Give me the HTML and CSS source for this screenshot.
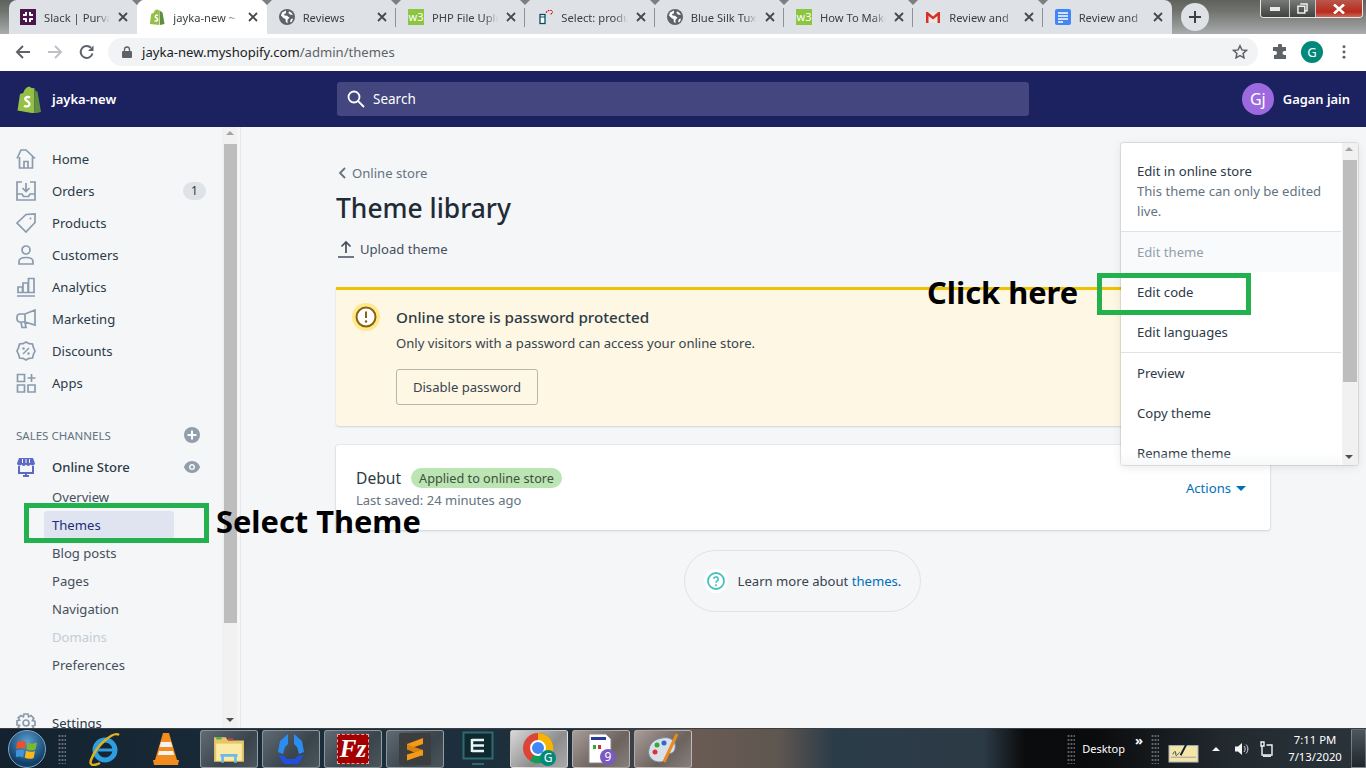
FILE: index.html
```html
<!DOCTYPE html>
<html lang="en">
<head>
<meta charset="utf-8">
<title>Theme library</title>
<link rel="stylesheet" href="styles.css">
</head>
<body>
<svg class="defs" width="0" height="0" aria-hidden="true">
  <symbol id="globe" viewBox="0 0 16 16"><circle cx="8" cy="8" r="8" fill="#5f6368"/><path fill="#fff" d="M7 1.500 3 3.500 2 6.500l3 3 1.500.2.3 3 1.700 1.800V10.800l2-2-2.500-2-2.500-.3-.5-1.500 1.700-.5L7 3.500zM10 2.300l-.5 1.700 1.500 1.500 3 .5A6.800 6.800 0 0 0 10 2.300zM14 9.500l-2 .5-1 2.500 1 1a6.800 6.800 0 0 0 2-4z"/></symbol>
  <symbol id="close" viewBox="0 0 10 10"><path d="M1 1l8 8M9 1l-8 8" stroke="#45484d" stroke-width="1.800" fill="none"/></symbol>
</svg>

<header class="tabstrip">
  <div class="tabs">
    <div class="tab">
      <svg class="fav" viewBox="0 0 16 16"><rect width="16" height="16" fill="#4a154b"/><path d="M6 3v3.500M3 6h3.500M10 3v3.500M9.500 6H13M6 9.500V13M3 10h3.500M10 9.500V13M9.500 10H13" stroke="#fff" stroke-width="2" fill="none"/></svg>
      <span class="tab-title">Slack | Purva</span>
      <svg class="x"><use href="#close"/></svg>
    </div>
    <div class="tab active">
      <svg class="fav" viewBox="0 0 16 16"><path fill="#95bf47" d="M9.500 1C8.800.3 7.500.3 6.500 1 5.500 1.800 4.800 2.800 4.500 4L2.300 4.700.8 15l9.500 1V1z"/><path fill="#5e8e3e" d="M10.500 1.500 11 16l4.500-1-2-11.500z"/><path d="M9 6.500C7.500 5.800 6 6.500 6.300 7.800c.3 1 2.500 1.500 2.400 3C8.600 12 7 12.500 5.500 11.700" stroke="#fff" stroke-width="1.500" fill="none"/></svg>
      <span class="tab-title">jayka-new ~</span>
      <svg class="x"><use href="#close"/></svg>
    </div>
    <div class="tab sep">
      <svg class="fav"><use href="#globe"/></svg>
      <span class="tab-title">Reviews</span>
      <svg class="x"><use href="#close"/></svg>
    </div>
    <div class="tab sep">
      <span class="fav w3">w3</span>
      <span class="tab-title">PHP File Upload</span>
      <svg class="x"><use href="#close"/></svg>
    </div>
    <div class="tab sep">
      <svg class="fav" viewBox="-3 -1 16 16"><rect x="0" y="4.500" width="5" height="9" fill="#fff" stroke="#00505f" stroke-width="1.300"/><path d="M0 7h5" stroke="#00505f"/><path d="M6 2.500 8.500.5h3L13 2.500l-2 1.500H9.500" stroke="#c00" stroke-width="1.200" stroke-dasharray="1.500 1" fill="none"/></svg>
      <span class="tab-title">Select: product</span>
      <svg class="x"><use href="#close"/></svg>
    </div>
    <div class="tab sep">
      <svg class="fav"><use href="#globe"/></svg>
      <span class="tab-title">Blue Silk Tuxedo</span>
      <svg class="x"><use href="#close"/></svg>
    </div>
    <div class="tab sep">
      <span class="fav w3">w3</span>
      <span class="tab-title">How To Make</span>
      <svg class="x"><use href="#close"/></svg>
    </div>
    <div class="tab sep">
      <svg class="fav" viewBox="0 0 16 16"><path fill="#e8e8e8" d="M1 3h14v11H1z"/><path fill="#d93025" d="M1 14V3h1.800L8 7.500 13.200 3H15v11h-2.500V7L8 10.500 3.500 7v7z"/></svg>
      <span class="tab-title">Review and</span>
      <svg class="x"><use href="#close"/></svg>
    </div>
    <div class="tab">
      <svg class="fav" viewBox="0 0 16 16"><rect width="16" height="16" rx="2" fill="#4285f4"/><path d="M3 4h10M3 7h10M3 10h10M3 13h5" stroke="#fff" stroke-width="1.500"/></svg>
      <span class="tab-title">Review and</span>
      <svg class="x"><use href="#close"/></svg>
    </div>
  </div>
  <div class="newtab"><svg width="14" height="14" viewBox="0 0 14 14"><path d="M7 1v12M1 7h12" stroke="#3c4043" stroke-width="2"/></svg></div>
  <div class="winctl">
    <span class="wbtn wmin"><svg width="10" height="4" viewBox="0 0 10 4"><rect width="10" height="4" fill="#e8eaea"/></svg></span>
    <span class="wbtn wmax"><svg width="11" height="11" viewBox="0 0 12 12"><path d="M3.500 1h7.500v7.500H8.500M1 3.500h7.500V11H1z" fill="none" stroke="#eee" stroke-width="1.600"/></svg></span>
    <span class="wbtn wclose"><svg width="12" height="10" viewBox="0 0 12 10"><path d="M1 .5l10 9M11 .5l-10 9" stroke="#fff" stroke-width="2.600"/></svg></span>
  </div>
</header>

<nav class="toolbar">
  <svg class="tbicon" viewBox="0 0 16 16"><path d="M15 8H2M8 2 2 8l6 6" fill="none" stroke="#5f6368" stroke-width="2"/></svg>
  <svg class="tbicon" viewBox="0 0 16 16"><path d="M1 8h13M8 2l6 6-6 6" fill="none" stroke="#bdc1c6" stroke-width="2"/></svg>
  <svg class="tbicon" viewBox="0 0 16 16"><path d="M13.500 9.500A6 6 0 1 1 12 3.800" fill="none" stroke="#5f6368" stroke-width="2"/><path d="M14.500 1.500v5.500H9z" fill="#5f6368"/></svg>
  <div class="omnibox">
    <svg class="lock" viewBox="0 0 10 12"><path d="M2.500 5V3.500a2.500 2.500 0 0 1 5 0V5" fill="none" stroke="#5f6368" stroke-width="1.300"/><rect y="5" width="10" height="7" rx="1" fill="#5f6368"/></svg>
    <span class="url">jayka-new.myshopify.com<span class="url-path">/admin/themes</span></span>
    <svg class="star" viewBox="0 0 16 16"><path d="M8 1.800l1.900 4.100 4.500.5-3.300 3 .9 4.500L8 11.700l-4 2.200.9-4.500-3.300-3 4.500-.5z" fill="none" stroke="#5f6368" stroke-width="1.500"/></svg>
  </div>
  <svg class="puzzle" viewBox="0 0 16 16"><path fill="#5f6368" d="M6 1.500a2 2 0 0 1 4 0V3h4v4h-1.500a2 2 0 0 0 0 4H14v4H2v-4h1a2 2 0 0 0 0-4H1V3h5z"/></svg>
  <span class="chrome-avatar">G</span>
  <svg class="dots" viewBox="0 0 4 16"><circle cx="2" cy="2" r="1.700" fill="#5f6368"/><circle cx="2" cy="8" r="1.700" fill="#5f6368"/><circle cx="2" cy="14" r="1.700" fill="#5f6368"/></svg>
</nav>

<header class="topbar">
  <div class="brand">
    <svg class="logo" viewBox="0 0 24 27"><path fill="#95bf47" d="M14.500 2C13.500.8 12.500.6 11.500.8 9 1.300 7 4 6.300 7L3 8 .5 24.500 17.500 27.500V2.300z"/><path fill="#5e8e3e" d="M18 2.500 17.500 27.500 24 26 20.500 5.500 18.500 5z"/><path d="M13 11.500c-2.500-1-5-.3-4.700 1.700.3 1.800 4.300 2.300 4.200 5-.1 2.300-3 2.800-5.500 1.500" fill="none" stroke="#fff" stroke-width="2.400"/></svg>
    <span class="brand-name">jayka-new</span>
  </div>
  <div class="search">
    <svg class="search-icon" viewBox="0 0 18 18"><circle cx="7" cy="7" r="5.500" fill="none" stroke="#fff" stroke-width="1.800"/><path d="M11 11l6 6" stroke="#fff" stroke-width="1.800"/></svg>
    <span>Search</span>
  </div>
  <div class="user">
    <span class="avatar">Gj</span>
    <span class="user-name">Gagan jain</span>
  </div>
</header>

<div class="workspace">
  <aside class="sidebar">
    <div class="side-scroll">
      <ul class="nav">
        <li class="nav-item"><svg class="ni" viewBox="0 0 20 20"><path d="M1 9.500 5 1h5l9 8.500M3.500 8v11h13V8M8 19v-6.500h4V19" fill="none" stroke="#8a9bad" stroke-width="1.700"/></svg>Home</li>
        <li class="nav-item"><svg class="ni" viewBox="0 0 20 20"><path d="M6 1H1v18h18V1h-5M1 13h5l1.500 2.500h5L14 13h5" fill="none" stroke="#8a9bad" stroke-width="1.700"/><path d="M10 2v8M6.500 7l3.500 3.500L13.500 7" fill="none" stroke="#8a9bad" stroke-width="1.700"/></svg>Orders<span class="count">1</span></li>
        <li class="nav-item"><svg class="ni" viewBox="0 0 20 20"><path d="M1 10 10 1.500 19 1v8.500L10 19z" fill="none" stroke="#8a9bad" stroke-width="1.700"/><circle cx="14.500" cy="5.500" r="1" fill="#8a9bad"/></svg>Products</li>
        <li class="nav-item"><svg class="ni" viewBox="0 0 20 20"><circle cx="10" cy="5" r="4" fill="none" stroke="#8a9bad" stroke-width="1.700"/><path d="M3 19v-2.500c0-3 3-4 7-4s7 1 7 4V19z" fill="none" stroke="#8a9bad" stroke-width="1.700"/></svg>Customers</li>
        <li class="nav-item"><svg class="ni" viewBox="0 0 20 20"><path d="M1 19h18M2 16v-6h4.500v6M7 16V6h5v10M12.500 16V1.500H18V16M1 15.500h18" fill="none" stroke="#8a9bad" stroke-width="1.700"/></svg>Analytics</li>
        <li class="nav-item"><svg class="ni" viewBox="0 0 20 20"><path d="M19 1v15L9 13H4a3 3 0 0 1-3-3V8a3 3 0 0 1 3-3h5zM9 5v8M5 13l1 5.500h4l-1-5" fill="none" stroke="#8a9bad" stroke-width="1.700"/></svg>Marketing</li>
        <li class="nav-item"><svg class="ni" viewBox="0 0 20 20"><path d="M10 1l3 1.700 3.500.3.900 3.500L19 10l-1.600 3.500-.9 3.500-3.500.3L10 19l-3-1.700-3.500-.3-.9-3.500L1 10l1.600-3.500.9-3.500L7 2.700z" fill="none" stroke="#8a9bad" stroke-width="1.700"/><path d="M7 13l6-6" stroke="#8a9bad" stroke-width="1.500"/><circle cx="7.500" cy="7.500" r="1.200" fill="#8a9bad"/><circle cx="12.500" cy="12.500" r="1.200" fill="#8a9bad"/></svg>Discounts</li>
        <li class="nav-item"><svg class="ni" viewBox="0 0 20 20"><path d="M1.500 1.500h7v7h-7zM1.500 12h7v7h-7zM12 12h7v7h-7zM15.500 1v8M11.500 5h8" fill="none" stroke="#8a9bad" stroke-width="1.700"/></svg>Apps</li>
      </ul>
      <div class="channels-head">
        <span>SALES CHANNELS</span>
        <svg class="mini" viewBox="0 0 16 16"><circle cx="8" cy="8" r="8" fill="#919eab"/><path d="M8 3.500v9M3.500 8h9" stroke="#fff" stroke-width="2"/></svg>
      </div>
      <div class="nav-item store"><svg class="ni" viewBox="0 0 20 20"><path d="M3 1h14l2 5.500a2.500 2.500 0 0 1-4.500 1 2.500 2.500 0 0 1-4.500 0 2.500 2.500 0 0 1-4.500 0A2.500 2.500 0 0 1 1 6.500z" fill="#5c6ac4"/><path d="M3 9v7h14V9M7 19h6M10 16v3" fill="none" stroke="#5c6ac4" stroke-width="2"/><path d="M6.500 2v4M10 2v4M13.500 2v4" stroke="#f4f6f8" stroke-width="1"/></svg>Online Store
        <svg class="mini eye" viewBox="0 0 16 12"><path d="M8 0C3.500 0 .8 3.500 0 6c.8 2.500 3.500 6 8 6s7.200-3.500 8-6c-.8-2.500-3.500-6-8-6z" fill="#919eab"/><circle cx="8" cy="6" r="3" fill="#f4f6f8"/><circle cx="8" cy="6" r="1.500" fill="#919eab"/></svg>
      </div>
      <ul class="subnav">
        <li class="sub">Overview</li>
        <li class="sub current">Themes</li>
        <li class="sub">Blog posts</li>
        <li class="sub">Pages</li>
        <li class="sub">Navigation</li>
        <li class="sub off">Domains</li>
        <li class="sub">Preferences</li>
      </ul>
      <div class="nav-item settings"><svg class="ni" viewBox="0 0 20 20"><path d="M8 1h4l.6 2.700 2.400-1.200 2.800 2.800-1.400 2.300 2.600.7v4l-2.600.7 1.400 2.300-2.800 2.800-2.400-1.200L12 19H8l-.6-2.600L5 17.600l-2.800-2.800 1.400-2.300L1 11.800v-4l2.600-.7-1.400-2.300L5 2.500l2.400 1.200z" fill="none" stroke="#8a9bad" stroke-width="1.700"/><circle cx="10" cy="10" r="3" fill="none" stroke="#8a9bad" stroke-width="1.700"/></svg>Settings</div>
    </div>
    <div class="vbar">
      <span class="arrow up"></span>
      <span class="thumb"></span>
      <span class="arrow down"></span>
    </div>
  </aside>

  <main class="content">
    <div class="back"><svg width="8" height="12" viewBox="0 0 8 12"><path d="M7 1 2 6l5 5" fill="none" stroke="#637381" stroke-width="1.800"/></svg>Online store</div>
    <h1 class="title">Theme library</h1>
    <div class="upload"><svg width="18" height="18" viewBox="0 0 18 18"><path d="M9 13V2M4.500 6.500 9 2l4.500 4.500M1 17h16" fill="none" stroke="#454f5b" stroke-width="1.700"/></svg>Upload theme</div>

    <section class="banner">
      <svg class="warn" viewBox="0 0 28 28"><circle cx="14" cy="14" r="14" fill="#ffea8a"/><circle cx="14" cy="14" r="9.500" fill="#fff" stroke="#8a6116" stroke-width="2"/><path d="M14 8.500v6.500" stroke="#8a6116" stroke-width="2"/><circle cx="14" cy="18.500" r="1.200" fill="#8a6116"/></svg>
      <div class="banner-body">
        <h2 class="banner-title">Online store is password protected</h2>
        <p class="banner-text">Only visitors with a password can access your online store.</p>
        <button class="btn">Disable password</button>
      </div>
    </section>

    <section class="card">
      <div class="card-main">
        <div class="theme-line"><span class="theme-name">Debut</span><span class="badge">Applied to online store</span></div>
        <div class="saved">Last saved: 24 minutes ago</div>
      </div>
      <div class="actions">Actions<span class="caret"></span></div>
    </section>

    <div class="help-wrap">
      <div class="help">
        <span class="help-ico"><svg width="18" height="18" viewBox="0 0 18 18"><circle cx="9" cy="9" r="8" fill="none" stroke="#47c1bf" stroke-width="1.800"/><path d="M6.800 7a2.200 2.200 0 1 1 3.300 2c-.8.500-1.100.9-1.100 1.700" fill="none" stroke="#47c1bf" stroke-width="1.600"/><circle cx="9" cy="13.200" r="1" fill="#47c1bf"/></svg></span>
        <span>Learn more about <a class="link">themes</a>.</span>
      </div>
    </div>
  </main>
</div>

<footer class="taskbar">
  <div class="orb"><svg width="22" height="22" viewBox="0 0 22 22"><path d="M1 4c3-1.500 6-1.500 9 0l-1.300 7C5.700 9.500 3 9.500 0 11z" fill="#e8532b"/><path d="M11.500 4.500c3 1.500 6 1.500 9.500 0L19.500 11.500c-3 1.500-6 1-9-.3z" fill="#7cb82f"/><path d="M0 12.500c3-1.500 5.500-1.500 8.500 0L7.200 19.500c-3-1.500-5.500-1.500-8.500 0z" fill="#3d95d8"/><path d="M10 12.700c3 1.400 6 1.600 9 .3l-1.300 7c-3 1.300-6 1-9-.3z" fill="#f6b81a"/></svg></div>
  <span class="grip"></span>
  <svg class="pin ie" viewBox="0 0 34 34"><circle cx="16" cy="18" r="10" fill="none" stroke="#2d9ee0" stroke-width="5"/><path d="M8 18h17" stroke="#2d9ee0" stroke-width="3"/><path d="M30 3C25-1 8 12 2 28c-2 6 3 6 9 3" fill="none" stroke="#e0b020" stroke-width="2.500"/></svg>
  <svg class="pin vlc" viewBox="0 0 28 34"><path d="M11 1h6l8 27H3z" fill="#f28c1e"/><path d="M9 10h10l1.500 5H7.500zM7 19h14l1 4H6z" fill="#f3f3f3"/><path d="M1 28h26l-1 5H2z" fill="#f28c1e"/></svg>
  <div class="tbtn first"><svg width="32" height="32" viewBox="0 0 30 30"><path d="M1 4h11l2 3h15v20H1z" fill="#e8c667"/><path d="M3 4h5v2H3z" fill="#4a4"/><path d="M14 5h5v2h-5z" fill="#c44"/><path d="M3 10h24v16H3z" fill="#fbeaa6"/><path d="M9 28v-7h12v7M7 21h16" fill="none" stroke="#6fb8e8" stroke-width="2.500"/></svg></div>
  <div class="tbtn"><svg width="30" height="32" viewBox="0 0 30 32"><path d="M12 1 4 8 2 19l5 2 2-7 3-3zM18 1l8 7 2 11-5 2-2-7-3-3z" fill="#2d8cf0"/><path d="M2 22l6 1 3 3h8l3-3 6-1-6 9H8z" fill="#1f50e0"/></svg></div>
  <div class="tbtn"><span class="fz">Fz</span></div>
  <div class="tbtn"><span class="subl"><svg width="18" height="24" viewBox="0 0 18 24"><path d="M17 1v6L1 12.500V7z" fill="#f59a16"/><path d="M1 7.500 17 13v6L1 12.500z" fill="#d9820e"/><path d="M17 13v5L1 23.500v-6z" fill="#f59a16"/></svg></span></div>
  <svg class="pin term" viewBox="0 0 32 36"><rect x="1.500" y="1.500" width="29" height="26" fill="#0e2a30" stroke="#2e6a70" stroke-width="2"/><path d="M10 9h12M10 14.500h12M10 20h12M10 8v13" stroke="#e9f4f4" stroke-width="2.500" fill="none"/><path d="M10 33h12" stroke="#2e6a70" stroke-width="2"/></svg>
  <div class="tbtn light"><svg width="34" height="34" viewBox="0 0 34 34"><circle cx="16" cy="16" r="15" fill="#db4437"/><path d="M16 16 29 24a15 15 0 0 1-21 5z" fill="#0f9d58"/><path d="M16 1a15 15 0 0 1 14 21L16 16z" fill="#f4b400"/><circle cx="16" cy="16" r="7" fill="#4285f4" stroke="#fff" stroke-width="2"/><circle cx="26" cy="26" r="8" fill="#00897b"/><text class="chip" x="26" y="30">G</text></svg></div>
  <div class="tbtn light2"><svg width="34" height="34" viewBox="0 0 34 34"><path d="M5 2h17l5 5v24H5z" fill="#fff" stroke="#888"/><path d="M7 5h15v3H7z" fill="#2a3a9a"/><path d="M9 13h3v4H9z" fill="#3a3"/><path d="M14 13h3v4h-3z" fill="#c33"/><circle cx="24" cy="25" r="8" fill="#7a5ac0"/><text class="chip" x="24" y="29">9</text></svg></div>
  <div class="tbtn light2"><svg width="34" height="34" viewBox="0 0 34 34"><path d="M16 6c8-2 15 3 13 11-1 5-6 4-8 6-3 3-2 7-7 7C6 30 1 24 3 17 4 11 9 7 16 6z" fill="#d9dfe8" stroke="#789"/><circle cx="11" cy="13" r="2.500" fill="#3a3"/><circle cx="9" cy="20" r="2.500" fill="#d33"/><circle cx="18" cy="11" r="2.500" fill="#36c"/><path d="M31 2 18 30" stroke="#e98a1c" stroke-width="3"/></svg></div>
  <div class="tray">
    <span class="grip"></span>
    <span class="desk">Desktop</span>
    <span class="chev">»</span>
    <span class="grip"></span>
    <svg class="note" viewBox="0 0 32 32"><rect x="1" y="13" width="30" height="17" fill="#f2e6a8" stroke="#aab"/><path d="M3 25h26" stroke="#a99"/><path d="M24 2 13 23" stroke="#123" stroke-width="2"/><path d="M5 22c2-4 3-4 3 0s3-2 4-2" fill="none" stroke="#345"/></svg>
    <span class="tri"></span>
    <svg class="tray-ico" viewBox="0 0 16 16"><path d="M1 5.500h3L8 2v12L4 10.500H1z" fill="#f4f4f4"/><path d="M10 5c1.500 1.500 1.500 4.500 0 6M12 3.500c2.500 2.500 2.500 6.500 0 9" fill="none" stroke="#dde" stroke-width="1"/></svg>
    <svg class="tray-ico" viewBox="0 0 16 16"><path d="M2 1h3v4H2zM3 5v9h10V4H7.500" fill="none" stroke="#f4f4f4" stroke-width="1.400"/><path d="M4 15.200h8" stroke="#f4f4f4" stroke-width="1.400"/></svg>
    <div class="clock"><span>7:11 PM</span><span>7/13/2020</span></div>
    <span class="showdesk"></span>
  </div>
</footer>

<div class="menu">
  <div class="menu-list">
    <div class="menu-sec top">
      <div class="mi">Edit in online store<span class="mi-note">This theme can only be edited live.</span></div>
    </div>
    <div class="menu-sec">
      <div class="mi dim">Edit theme</div>
      <div class="mi">Edit code</div>
      <div class="mi">Edit languages</div>
    </div>
    <div class="menu-sec last">
      <div class="mi">Preview</div>
      <div class="mi">Copy theme</div>
      <div class="mi">Rename theme</div>
    </div>
  </div>
  <div class="vbar menu-bar">
    <span class="arrow up"></span>
    <span class="thumb"></span>
    <span class="arrow down"></span>
  </div>
</div>

<div class="mark mark-themes"></div>
<div class="mark mark-code"></div>
<div class="note-label label-click">Click here</div>
<div class="note-label label-select">Select Theme</div>
</body>
</html>
```
FILE: styles.css
```css
* { box-sizing: border-box; }
html, body { margin: 0; padding: 0; }
body {
  position: relative;
  width: 1366px;
  height: 768px;
  overflow: hidden;
  display: flex;
  flex-direction: column;
  font-family: "Noto Sans", "Open Sans", sans-serif;
  font-size: 13px;
  color: #212b36;
  background: #f4f6f8;
}
ul { list-style: none; margin: 0; padding: 0; }
h1, h2, p { margin: 0; font-weight: 400; }
.defs { position: absolute; }

/* browser tabs */
.tabstrip {
  position: relative;
  display: flex;
  align-items: flex-start;
  height: 34px;
  flex: none;
  background: linear-gradient(180deg, #5f625c 0, #6f716c 30%, #a9abad 100%);
  padding-left: 9px;
}
.tabs { display: flex; width: 1163px; height: 34px; background: #dee1e6; border-radius: 8px 8px 0 0; }
.tab {
  position: relative;
  flex: 1 1 0;
  min-width: 0;
  display: flex;
  align-items: center;
  gap: 8px;
  padding: 0 9px 0 12px;
  font-size: 11.200px;
  color: #3c4043;
}
.tab:first-child { padding-left: 11px; }
.tab::before {
  content: "";
  position: absolute;
  right: -5px;
  top: 0;
  border: 5px solid transparent;
  border-top-color: #7d7f7f;
  border-bottom: 0;
}
.tab:last-child::before { display: none; }
.tab.sep::after {
  content: "";
  position: absolute;
  right: 0;
  top: 8px;
  height: 19px;
  width: 1px;
  background: #8d9094;
}
.tab.active { background: #fff; border-radius: 8px 8px 0 0; z-index: 1; }
.fav { width: 16px; height: 16px; flex: none; }
.w3 {
  display: block;
  background: #8cc63f;
  color: #fff;
  font-size: 11px;
  line-height: 15px;
  text-align: center;
  overflow: hidden;
}
.tab-title {
  flex: 1 1 0;
  min-width: 0;
  white-space: nowrap;
  overflow: hidden;
  -webkit-mask-image: linear-gradient(90deg, #000 80%, transparent 100%);
  mask-image: linear-gradient(90deg, #000 80%, transparent 100%);
}
.x { width: 10px; height: 10px; flex: none; }
.newtab {
  width: 28px;
  height: 28px;
  margin: 3px 0 0 9px;
  border-radius: 50%;
  background: #dee1e6;
  display: flex;
  align-items: center;
  justify-content: center;
}
.winctl {
  display: flex;
  margin-left: auto;
  margin-right: 3px;
  height: 18px;
  border: 1px solid #e8e8e8;
  border-top: 0;
  border-radius: 0 0 4px 4px;
  overflow: hidden;
}
.wbtn {
  display: flex;
  align-items: center;
  justify-content: center;
  background: linear-gradient(180deg, #777a76, #3f4240);
  border-right: 1px solid #ccc;
}
.wmin { width: 29px; }
.wmax { width: 26px; }
.wclose { width: 46px; border: 0; background: linear-gradient(180deg, #b9564b, #b82b1c 70%, #c96a5a); }

/* toolbar */
.toolbar {
  height: 37px;
  flex: none;
  background: #fff;
  display: flex;
  align-items: center;
  padding: 4px 0 5px 15px;
}
.tbicon { width: 16px; height: 16px; margin-right: 16px; flex: none; }
.tbicon:nth-child(3) { margin-right: 13px; }
.omnibox {
  width: 1150px;
  height: 28px;
  background: #f1f3f4;
  border-radius: 14px;
  display: flex;
  align-items: center;
  padding: 0 10px 0 14px;
  flex: none;
}
.lock { width: 10px; height: 12px; margin-right: 10px; flex: none; }
.url { font-size: 13.100px; color: #202124; white-space: nowrap; }
.url-path { color: #5f6368; }
.star { width: 16px; height: 16px; margin-left: auto; }
.puzzle { width: 16px; height: 16px; margin-left: 14px; flex: none; }
.chrome-avatar {
  width: 22px;
  height: 22px;
  margin-left: 13px;
  border-radius: 50%;
  background: #00897b;
  color: #fff;
  font-size: 13px;
  line-height: 22px;
  text-align: center;
  flex: none;
}
.dots { width: 4px; height: 14px; margin-left: 19px; flex: none; }

/* shopify top bar */
.topbar {
  height: 56px;
  flex: none;
  display: flex;
  align-items: center;
  background: #1c2260;
  color: #fff;
}
.brand { width: 337px; flex: none; display: flex; align-items: center; padding-left: 17px; }
.logo { width: 24px; height: 27px; margin-right: 11px; flex: none; }
.brand-name { font-size: 13px; font-weight: 600; }
.search {
  width: 692px;
  height: 34px;
  flex: none;
  display: flex;
  align-items: center;
  padding-left: 10px;
  gap: 8px;
  background: #43467f;
  border-radius: 3px;
  font-size: 13.500px;
}
.search-icon { width: 18px; height: 18px; }
.user { display: flex; align-items: center; margin-left: auto; padding-right: 16px; }
.avatar {
  width: 32px;
  height: 32px;
  border-radius: 50%;
  background: #9c6ade;
  font-size: 16px;
  line-height: 32px;
  text-align: center;
  margin-right: 9px;
}
.user-name { font-size: 12.900px; font-weight: 600; }

/* workspace */
.workspace { flex: 1 1 0; min-height: 0; display: flex; }
.sidebar {
  width: 241px;
  flex: none;
  display: flex;
  border-right: 1px solid #e6e8eb;
  padding-right: 2px;
  overflow: hidden;
}
.side-scroll { width: 222px; flex: none; padding-top: 16px; }
.nav-item {
  position: relative;
  display: flex;
  align-items: center;
  height: 32px;
  padding-left: 16px;
  font-size: 13.100px;
  color: #2d3a46;
}
.ni { width: 20px; height: 20px; margin-right: 16px; flex: none; }
.count {
  margin-left: auto;
  margin-right: 16px;
  width: 23px;
  height: 18px;
  border-radius: 9px;
  background: #dfe3e8;
  font-size: 12px;
  line-height: 18px;
  text-align: center;
}
.channels-head {
  display: flex;
  align-items: center;
  justify-content: space-between;
  margin-top: 20px;
  height: 32px;
  padding: 0 22px 0 16px;
  font-size: 11.500px;
  color: #637381;
}
.mini { width: 16px; height: 16px; flex: none; }
.eye { height: 12px; position: absolute; right: 22px; top: 10px; }
.store { font-weight: 500; }
.sub {
  height: 28px;
  margin-left: 44px;
  margin-right: 48px;
  padding-left: 8px;
  line-height: 28px;
  font-size: 13.100px;
  color: #454f5b;
  border-radius: 3px;
}
.sub.current { background: #e0e4f1; color: #202e78; }
.sub.off { color: #c4cdd5; }
.settings { margin-top: 28px; }

.vbar {
  width: 15px;
  flex: none;
  position: relative;
  background: #f1f1f1;
}
.thumb {
  position: absolute;
  left: 2px;
  right: 0;
  top: 17px;
  height: 479px;
  background: #bdbdbd;
}
.arrow {
  position: absolute;
  left: 4px;
  border: 4px solid transparent;
}
.arrow.up { top: 4px; border-bottom-color: #a3a3a3; border-top: 0; }
.arrow.down { bottom: 6px; border-top-color: #505050; border-bottom: 0; }

/* main */
.content { flex: 1 1 0; min-width: 0; padding: 33px 95px 0 95px; }
.back { display: flex; align-items: center; gap: 6px; height: 26px; padding-left: 2px; color: #637381; font-size: 13.100px; }
.title { font-size: 26.400px; font-weight: 500; line-height: 36px; margin-top: 4px; color: #212b36; }
.upload { display: flex; align-items: center; gap: 5px; height: 28px; margin-top: 9px; padding-left: 1px; font-size: 13.100px; color: #454f5b; }
.banner {
  display: flex;
  margin-top: 24px;
  height: 139px;
  background: #fdf7e3;
  border-top: 3px solid #eec200;
  box-shadow: 0 1px 2px rgba(63, 63, 68, .2);
  padding: 13px 16px 0 16px;
  gap: 16px;
  border-radius: 0 0 3px 3px;
}
.warn { width: 28px; height: 28px; flex: none; }
.banner-title { font-size: 15.200px; font-weight: 500; line-height: 20px; margin-top: 4px; color: #2d3a46; }
.banner-text { font-size: 13.100px; line-height: 20px; margin-top: 6px; color: #38444f; }
.btn {
  display: block;
  margin-top: 16px;
  width: 142px;
  height: 36px;
  background: transparent;
  border: 1px solid #b8b6a8;
  border-radius: 3px;
  font: inherit;
  font-size: 13.100px;
  color: #38444f;
}
.card {
  display: flex;
  align-items: flex-start;
  justify-content: space-between;
  margin-top: 19px;
  margin-right: 1px;
  height: 85px;
  background: #fff;
  border-radius: 3px;
  box-shadow: 0 0 0 1px rgba(63, 63, 68, .05), 0 1px 3px rgba(63, 63, 68, .15);
  padding: 22px 24px 0 20px;
}
.theme-line { display: flex; align-items: center; gap: 10px; height: 22px; }
.theme-name { font-size: 15.600px; color: #2d3a46; }
.badge {
  height: 20px;
  padding: 0 8px;
  border-radius: 10px;
  background: #bbe5b3;
  color: #414f3e;
  font-size: 12.700px;
  line-height: 20px;
}
.saved { margin-top: 1px; font-size: 13px; line-height: 20px; color: #637381; }
.actions { display: flex; align-items: center; gap: 5px; margin-top: 12px; font-size: 13.100px; color: #006fbb; }
.caret { border: 5px solid transparent; border-top-color: #006fbb; border-bottom: 0; }
.help-wrap { display: flex; justify-content: center; margin-top: 20px; padding-right: 2px; }
.help {
  display: flex;
  align-items: center;
  gap: 10px;
  height: 62px;
  padding: 0 19px;
  border: 1px solid #dfe3e8;
  border-radius: 31px;
  font-size: 13.100px;
  color: #38444f;
}
.help-ico {
  width: 24px;
  height: 24px;
  border-radius: 50%;
  background: #fff;
  display: flex;
  align-items: center;
  justify-content: center;
}
.link { color: #006fbb; }

/* taskbar */
.taskbar {
  height: 40px;
  flex: none;
  display: flex;
  align-items: center;
  padding-left: 8px;
  color: #fff;
  border-top: 1px solid #3a3e42;
  background: linear-gradient(90deg, #14222f 0, #1c2f3d 28%, #20303c 44%, #6b5c55 50%, #5f5650 57%, #2b3c49 61%, #2c3a45 72%, #0b0c0d 75%, #0a0b0c 80%, #222a30 90%, #2b343b 100%);
}
.orb {
  width: 38px;
  height: 38px;
  flex: none;
  border-radius: 50%;
  display: flex;
  align-items: center;
  justify-content: center;
  background: radial-gradient(circle at 50% 30%, #5a9fd0, #123f6a 70%);
  border: 1px solid #7fa8c4;
}
.grip {
  width: 8px;
  height: 30px;
  flex: none;
  background-image: radial-gradient(circle, rgba(255, 255, 255, .35) 1px, transparent 1.200px);
  background-size: 3px 4px;
}
.taskbar > .grip { margin-left: 12px; }
.pin { flex: none; }
.ie { width: 34px; height: 34px; margin-left: 23px; }
.vlc { width: 28px; height: 34px; margin-left: 29px; }
.tbtn {
  width: 58px;
  height: 38px;
  flex: none;
  margin-right: 4px;
  display: flex;
  align-items: center;
  justify-content: center;
  border: 1px solid rgba(255, 255, 255, .4);
  border-radius: 3px;
  background: linear-gradient(135deg, #5f6a72, #39444c 60%, #4c565c);
}
.tbtn.first { margin-left: 20px; }
.tbtn.light { background: linear-gradient(135deg, #d8d8d8, #8d8d8d 60%, #aaa); }
.tbtn.light2 { background: linear-gradient(135deg, #a89d98, #6c625e 60%, #85807c); }
.fz {
  width: 32px;
  height: 30px;
  background: #a50000;
  color: #fff;
  font-family: "Liberation Serif", serif;
  font-weight: 700;
  font-style: italic;
  font-size: 25px;
  line-height: 28px;
  text-align: center;
  border: 1px dashed #e8a0a0;
}
.subl {
  width: 32px;
  height: 32px;
  display: flex;
  align-items: center;
  justify-content: center;
  background: #3b3d3e;
  border-radius: 2px;
}
.term { width: 32px; height: 36px; margin: 0 16px 0 14px; }
.chip { fill: #fff; font-size: 12px; text-anchor: middle; font-family: "Noto Sans", sans-serif; }
.tray { display: flex; align-items: center; margin-left: auto; height: 100%; }
.tray .grip { width: 8px; }
.desk { margin: 0 10px 0 7px; font-size: 11px; }
.chev { width: 10px; margin-right: 6px; font-size: 13px; font-weight: 700; line-height: 12px; align-self: flex-start; margin-top: 5px; }
.note { width: 31px; height: 31px; margin: 0 13px 0 9px; }
.tri { border: 4px solid transparent; border-bottom-color: #f4f4f4; border-top: 0; margin-right: 14px; }
.tray-ico { width: 16px; height: 16px; margin-right: 9px; }
.clock {
  display: flex;
  flex-direction: column;
  align-items: center;
  width: 54px;
  margin: 0 9px 2px 4px;
  font-size: 11.300px;
  line-height: 17px;
  white-space: nowrap;
}
.showdesk {
  width: 15px;
  height: 100%;
  border: 1px solid rgba(255, 255, 255, .3);
  background: linear-gradient(180deg, #4c565e, #20272c);
}

/* overlays */
.menu {
  position: absolute;
  left: 1121px;
  top: 143px;
  width: 237px;
  height: 322px;
  display: flex;
  background: #fff;
  border-radius: 3px;
  box-shadow: 0 0 0 1px rgba(63, 63, 68, .12), 0 2px 8px rgba(63, 63, 68, .12);
  overflow: hidden;
}
.menu-list { position: relative; width: 220px; flex: none; overflow: hidden; }
.menu-list::after {
  content: "";
  position: absolute;
  left: 0;
  right: 0;
  bottom: 0;
  height: 12px;
  background: linear-gradient(180deg, rgba(255, 255, 255, 0), rgba(244, 246, 248, .8));
}
.menu-sec { border-bottom: 1px solid #dfe3e8; }
.menu-sec.top { padding-top: 8px; }
.menu-sec.last { border-bottom: 0; }
.mi { padding: 10px 16px; font-size: 13.100px; line-height: 20px; color: #2d3a46; }
.mi-note { display: block; color: #637381; }
.mi.dim { background: #f9fafb; color: #919eab; }
.menu-bar { width: 16px; margin-left: 1px; }
.menu-bar .thumb { left: 1px; right: 1px; height: 222px; top: 17px; }
.menu-bar .arrow { left: 3px; }

.mark { position: absolute; border: 5px solid #22b14c; }
.mark-themes { left: 24px; top: 503px; width: 185px; height: 40px; }
.mark-code { left: 1097px; top: 273px; width: 154px; height: 42px; }
.note-label { position: absolute; font-size: 30.800px; font-weight: 700; line-height: 34px; color: #000; white-space: nowrap; }
.label-click { left: 927px; top: 275px; }
.label-select { left: 216px; top: 504px; }
```
